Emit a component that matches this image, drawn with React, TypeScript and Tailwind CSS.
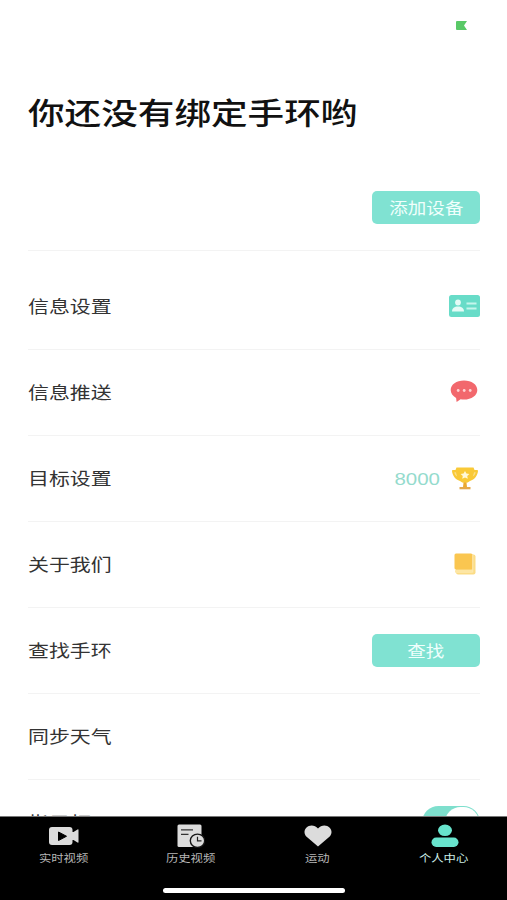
import type { ReactNode } from "react";

function CardIcon() {
  return (
    <svg width="31" height="22" viewBox="0 0 31 22">
      <rect width="31" height="22" rx="2.5" fill="#68dcc8" />
      <circle cx="9" cy="7.5" r="2.9" fill="#e4fbf6" />
      <path d="M3 16.5c0-3.2 2.4-5 6-5s6 1.800 6 5z" fill="#e4fbf6" />
      <path d="M17.500 8.500h10M17.500 13.500h10" stroke="#c5f5ec" strokeWidth="1.800" />
    </svg>
  );
}

function MessageIcon() {
  return (
    <svg width="28" height="23" viewBox="0 0 28 23">
      <path
        d="M14 .5C6.400.500.700 4.500.700 10c0 3.300 2 6.100 5.400 7.900L6.600 22l4-2.700c1.100.200 2.200.300 3.400.300 7.600 0 13.300-4.100 13.300-9.600S21.600.500 14 .5z"
        fill="#f2686d"
      />
      <circle cx="8.200" cy="10.500" r="1.400" fill="#ffd3d3" />
      <circle cx="14.200" cy="10.500" r="1.400" fill="#ffd3d3" />
      <circle cx="20.200" cy="10.500" r="1.400" fill="#ffd3d3" />
    </svg>
  );
}

function TrophyIcon() {
  return (
    <svg width="28" height="23" viewBox="0 0 28 23">
      <path d="M5.500.5h17l1 2.500h2.600q1 0 .9 1c-.5 4.700-3.300 8.500-8 10-1.500 1.200-3 2-5 2s-3.500-.8-5-2c-4.700-1.500-7.500-5.300-8-10q-.1-1 .9-1h2.600z" fill="#f9c937" />
      <path d="M3.300 5.200h1.600l1.300 4.300c-1.700-1-2.600-2.400-2.900-4.300zM24.700 5.200h-1.600l-1.300 4.300c1.700-1 2.600-2.400 2.900-4.300z" fill="#fbdf87" />
      <path d="M12.500 15.500h3l.5 5h-4z" fill="#eba92f" />
      <path d="M8.500 20h11v2.300h-11z" fill="#e5a849" />
      <path d="m14 4 1.400 2.500 3 .4-2.200 2 .6 2.900-2.800-1.400-2.800 1.400.6-2.900-2.200-2 3-.4z" fill="#fff8d8" />
    </svg>
  );
}

function BookIcon() {
  return (
    <svg width="22" height="22" viewBox="0 0 22 22">
      <rect x="2" y="1.500" width="19.500" height="20" rx="2" fill="#fbdc86" />
      <rect x="1" y="16.500" width="18" height="3.500" rx="1.500" fill="#fde6a4" />
      <rect x=".5" y=".5" width="18" height="16" rx="1.500" fill="#fac650" />
      <path d="M18.800 2v17.500" stroke="#fce9b2" />
    </svg>
  );
}

function VideoIcon() {
  return (
    <svg width="30" height="24" viewBox="0 0 30 24">
      <rect x="0" y="3" width="23.500" height="18" rx="3" fill="#dcdcdc" />
      <path d="M23 8h1.500l4-2.500q1-.5 1 .500v12q0 1-1 .500l-4-2.500H23z" fill="#dcdcdc" />
      <path d="M9.500 8v8.500l8-4.250z" fill="#000" stroke="#000" strokeLinejoin="round" />
    </svg>
  );
}

function HistoryIcon() {
  return (
    <svg width="28" height="24" viewBox="0 0 28 24">
      <rect x=".5" y=".5" width="24" height="22.500" rx="1.500" fill="#dcdcdc" />
      <path d="M4 5.800h12M4 10.300h7.500" stroke="#333" strokeWidth="1.200" />
      <ellipse cx="20.500" cy="16.800" rx="7.200" ry="6.700" fill="#dcdcdc" stroke="#151515" strokeWidth="1.400" />
      <path d="M20.500 12.800v4h4" fill="none" stroke="#222" strokeWidth="1.200" />
    </svg>
  );
}

function HeartIcon() {
  return (
    <svg width="28" height="24" viewBox="0 0 28 24">
      <path d="M14 22.500 2.300 12.500C-.2 10 0 6 2.300 3.700 5.500.700 10.800.900 14 4.600c3.200-3.700 8.500-3.900 11.700-.9 2.300 2.300 2.500 6.300 0 8.800z" fill="#dcdcdc" />
    </svg>
  );
}

function ProfileIcon() {
  return (
    <svg width="28" height="24" viewBox="0 0 28 24">
      <ellipse cx="14" cy="6.300" rx="7" ry="5.800" fill="#68e4cd" />
      <rect x=".5" y="13.500" width="27" height="9.500" rx="4.700" fill="#68e4cd" />
    </svg>
  );
}

function Button({ children }: { children: ReactNode }) {
  return (
    <button className="flex h-[33px] w-[108px] items-center justify-center rounded-[5px] bg-[#80e2d2] text-[15.700px] text-[#f0fffc]">
      <span className="block scale-x-[1.180]">{children}</span>
    </button>
  );
}

const rows: { label: string; right?: ReactNode }[] = [
  { label: "信息设置", right: <div className="mb-0.5"><CardIcon /></div> },
  { label: "信息推送", right: <div className="mr-0.5 mb-0.5"><MessageIcon /></div> },
  {
    label: "目标设置",
    right: (
      <div className="mr-px flex items-center">
        <span className="mt-0.5 mr-[11px] block w-[37px] origin-right scale-x-[1.240] text-right font-['Liberation_Sans'] text-[16.500px] text-[#94dbcd]">
          8000
        </span>
        <TrophyIcon />
      </div>
    ),
  },
  { label: "关于我们", right: <div className="mr-1 mb-0.5"><BookIcon /></div> },
  { label: "查找手环", right: <Button>查找</Button> },
  { label: "同步天气" },
  {
    label: "指示灯",
    right: (
      <div className="flex h-[33px] w-[58px] justify-end rounded-full bg-[#7edfcd] p-px">
        <div className="h-[31px] w-[34px] rounded-full bg-white" />
      </div>
    ),
  },
];

const tabs = [
  { label: "实时视频", icon: <VideoIcon />, color: "text-[#b5b5b5]" },
  { label: "历史视频", icon: <HistoryIcon />, color: "text-[#b5b5b5]" },
  { label: "运动", icon: <HeartIcon />, color: "text-[#b5b5b5]" },
  { label: "个人中心", icon: <ProfileIcon />, color: "text-[#cdeee7]" },
];

export default function App() {
  return (
    <div className="flex h-[900px] w-[507px] flex-col overflow-hidden bg-white font-['Noto_Sans_CJK_SC',sans-serif]">
      <main className="h-[816px] shrink-0 overflow-hidden pr-[27px] pl-7">
        <div className="flex h-[86px] justify-end pt-[21px] pr-[13px]">
          <svg width="11" height="9" viewBox="0 0 11 9">
            <path d="M1 0h10L8 4.500 11 9H1Q0 9 0 8V1Q0 0 1 0z" fill="#59c967" />
          </svg>
        </div>
        <h1 className="h-[50px] w-max origin-left scale-x-[1.220] text-[30px] leading-[50px] font-medium text-[#111]">
          你还没有绑定手环哟
        </h1>
        <div className="flex h-[115px] items-end justify-end border-b border-[#f3f3f3] pb-[26px]">
          <Button>添加设备</Button>
        </div>
        <div className="pt-[13px]">
          {rows.map((row) => (
            <div key={row.label} className="flex h-[86px] items-center justify-between border-b border-[#f3f3f3]">
              <span className="mb-0.5 block origin-left scale-x-[1.210] text-[17.300px] text-[#333]">{row.label}</span>
              {row.right}
            </div>
          ))}
        </div>
      </main>
      <nav className="flex h-[84px] shrink-0 flex-col border-t border-[#777] bg-black">
        <div className="flex h-[71px] pt-[7px]">
          {tabs.map((tab) => (
            <div key={tab.label} className="flex flex-1 flex-col items-center">
              <div className="pl-0.5">{tab.icon}</div>
              <span className={`mt-0.5 block scale-x-[1.200] text-[10.300px] leading-[15px] ${tab.color}`}>{tab.label}</span>
            </div>
          ))}
        </div>
        <div className="ml-[163px] h-[5px] w-[182px] shrink-0 rounded-full bg-white" />
      </nav>
    </div>
  );
}
